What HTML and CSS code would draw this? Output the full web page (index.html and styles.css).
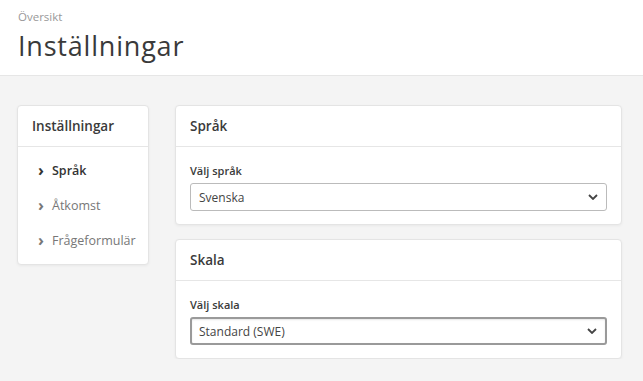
FILE: index.html
```html
<!DOCTYPE html>
<html lang="sv">
<head>
    <meta charset="UTF-8">
    <meta name="viewport" content="width=device-width, initial-scale=1.0">
    <title>Inställningar</title>
    <link rel="stylesheet" href="styles.css">
</head>
<body>
    <header class="page-header">
        <div class="crumb">Översikt</div>
        <h1>Inställningar</h1>
    </header>

    <main class="layout">
        <nav class="card side">
            <div class="card-head">Inställningar</div>
            <ul class="side-list">
                <li class="active"><span class="chev">›</span>Språk</li>
                <li><span class="chev">›</span>Åtkomst</li>
                <li><span class="chev">›</span>Frågeformulär</li>
            </ul>
        </nav>

        <div class="content">
            <section class="card">
                <div class="card-head">Språk</div>
                <div class="card-body">
                    <label class="field-label">Välj språk</label>
                    <div class="select">
                        <span>Svenska</span>
                        <svg width="10" height="6" viewBox="0 0 10 6"><path d="M1 1l4 4 4-4" fill="none" stroke="#444" stroke-width="1.8"/></svg>
                    </div>
                </div>
            </section>

            <section class="card">
                <div class="card-head">Skala</div>
                <div class="card-body">
                    <label class="field-label">Välj skala</label>
                    <div class="select focused">
                        <span>Standard (SWE)</span>
                        <svg width="10" height="6" viewBox="0 0 10 6"><path d="M1 1l4 4 4-4" fill="none" stroke="#444" stroke-width="1.8"/></svg>
                    </div>
                </div>
            </section>
        </div>
    </main>
</body>
</html>
```

FILE: styles.css
```css
body {
    margin: 0;
    font-family: "Open Sans", "Noto Sans", sans-serif;
    background-color: #f4f4f4;
    color: #333;
}
.page-header {
    background: #fff;
    height: 76px;
    box-sizing: border-box;
    padding: 9px 18px 0;
    border-bottom: 1px solid #e6e6e6;
}
.crumb {
    font-size: 11.5px;
    color: #999;
    line-height: 16px;
}
h1 {
    margin: 3px 0 0;
    font-size: 27px;
    font-weight: 400;
    color: #3a3a3a;
    line-height: 36px;
    letter-spacing: 0.8px;
}
.layout {
    display: flex;
    align-items: flex-start;
    gap: 26px;
    padding: 29px 21px 0 17px;
}
.card {
    background: #fff;
    border: 1px solid #e4e4e4;
    border-radius: 4px;
    box-shadow: 0 1px 3px rgba(0,0,0,0.05);
}
.card-head {
    height: 40px;
    display: flex;
    align-items: center;
    padding: 0 14px;
    font-size: 13.5px;
    font-weight: 600;
    color: #3a3a3a;
    border-bottom: 1px solid #e6e6e6;
}
.side {
    width: 130px;
    flex-shrink: 0;
}
.side-list {
    list-style: none;
    margin: 0;
    padding: 6px 0;
}
.side-list li {
    height: 35px;
    display: flex;
    align-items: center;
    padding-left: 20px;
    font-size: 12.5px;
    color: #777;
}
.side-list li.active {
    color: #333;
    font-weight: 600;
}
.chev {
    width: 14px;
    font-size: 16px;
    font-weight: 700;
    margin-top: -2px;
}
.content {
    flex: 1;
    display: flex;
    flex-direction: column;
    gap: 14px;
}
.card-body {
    padding: 16px 14px 13px;
}
.field-label {
    display: block;
    font-size: 11px;
    font-weight: 600;
    color: #3a3a3a;
    line-height: 16px;
    margin-bottom: 4px;
}
.select {
    height: 28px;
    box-sizing: border-box;
    border: 1px solid #bbb;
    border-radius: 3px;
    display: flex;
    align-items: center;
    justify-content: space-between;
    padding: 0 8px 0 8px;
    font-size: 12px;
    color: #444;
}
.select.focused {
    border: 2px solid #9a9a9a;
    padding-left: 7px;
    box-shadow: inset 0 1px 2px rgba(0,0,0,0.1);
}
```
